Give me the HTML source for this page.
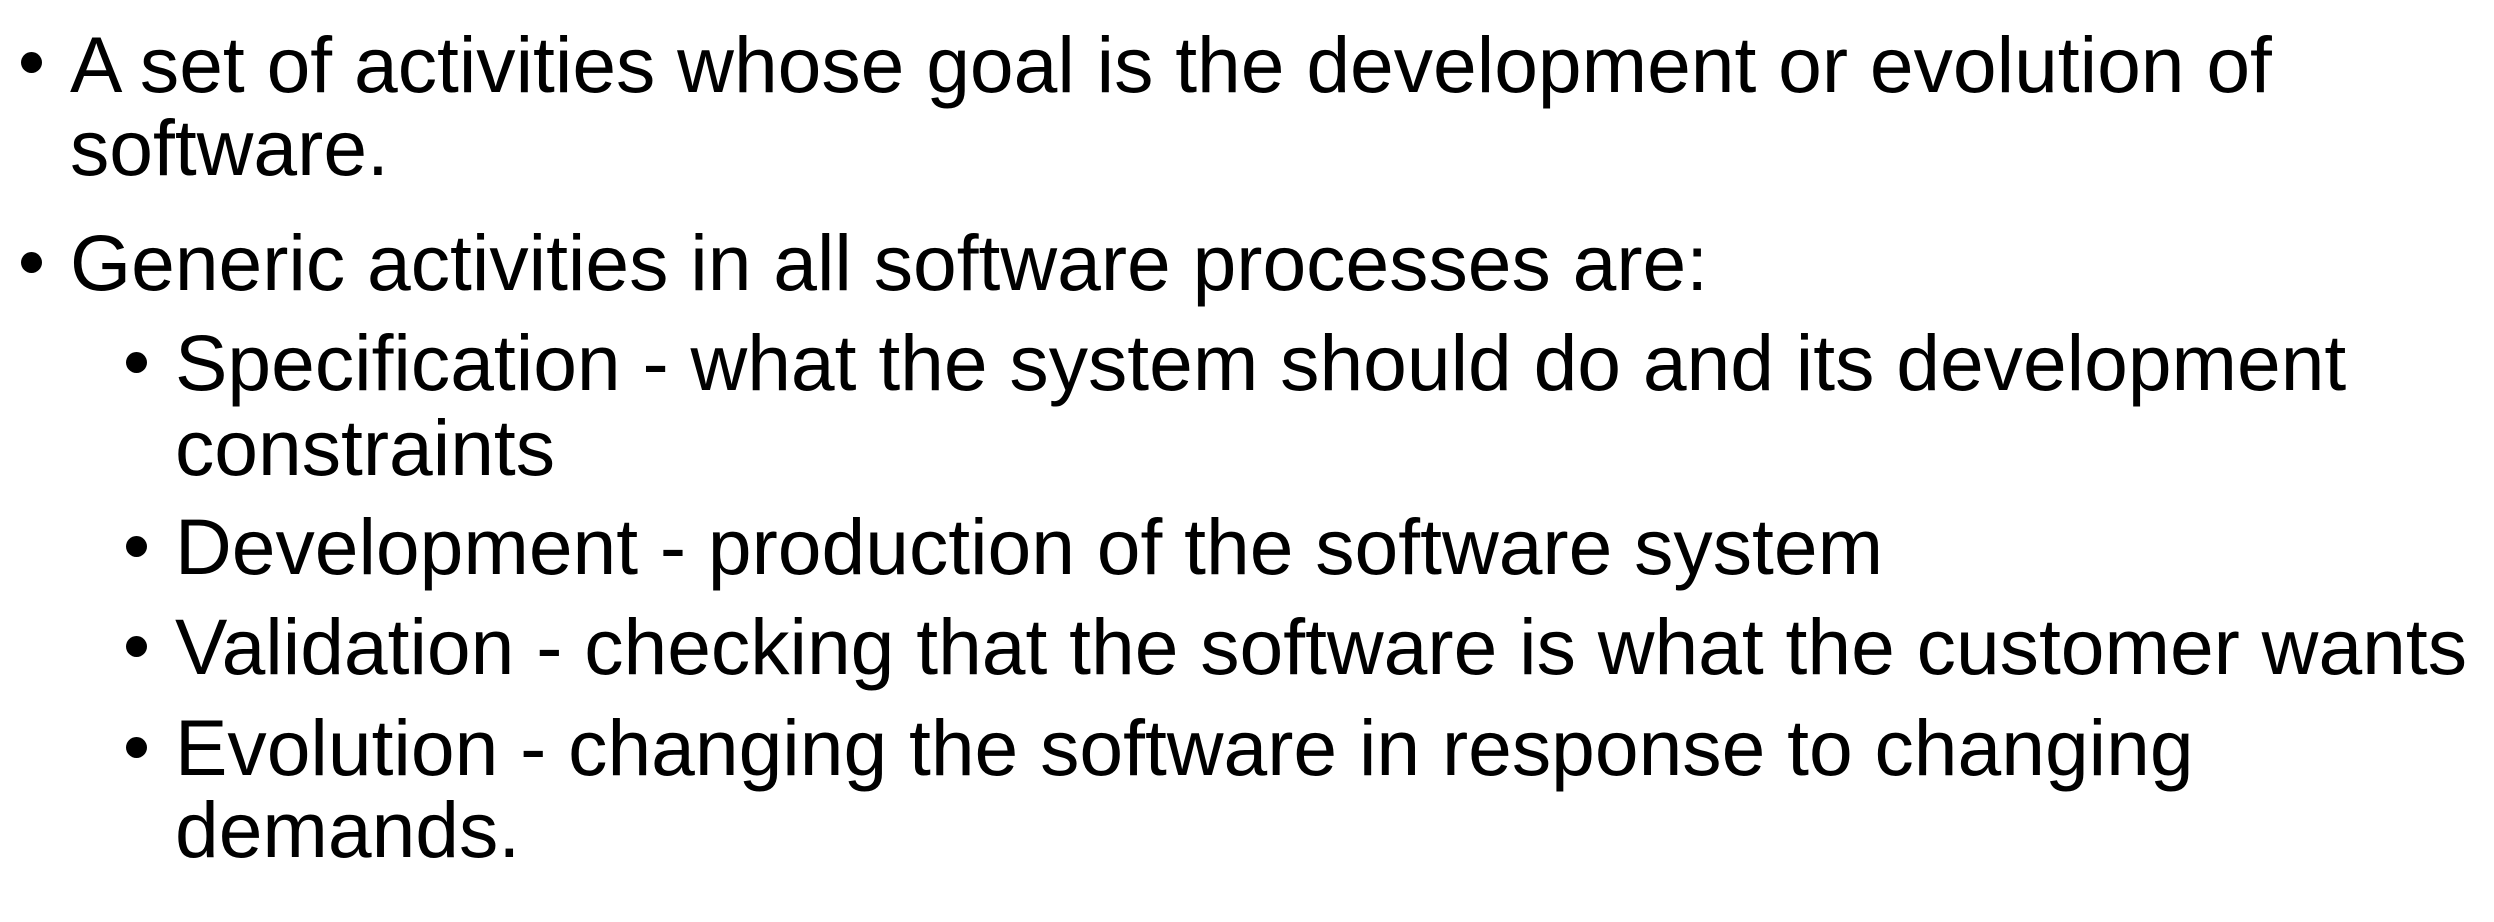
<!DOCTYPE html>
<html><head><meta charset="utf-8"><style>
html,body{margin:0;padding:0;background:#fff;width:2494px;height:922px;overflow:hidden}
.l{position:absolute;font-family:"Liberation Sans",Arial,sans-serif;font-size:78.6px;line-height:84px;white-space:nowrap;color:#000}
.b{position:absolute;width:21px;height:21px;border-radius:50%;background:#000}
</style></head><body>
<div class="b" style="left:21px;top:52px"></div>
<div class="l" style="left:70px;top:23px">A set of activities whose goal is the development or evolution of</div>
<div class="l" style="left:70px;top:106px">software.</div>
<div class="b" style="left:21px;top:252px"></div>
<div class="l" style="left:70px;top:221px">Generic activities in all software processes are:</div>
<div class="b" style="left:126px;top:352px"></div>
<div class="l" style="left:175px;top:321px">Specification - what the system should do and its development</div>
<div class="l" style="left:175px;top:406px">constraints</div>
<div class="b" style="left:126px;top:536px"></div>
<div class="l" style="left:175px;top:505px">Development - production of the software system</div>
<div class="b" style="left:126px;top:636px"></div>
<div class="l" style="left:175px;top:605px">Validation - checking that the software is what the customer wants</div>
<div class="b" style="left:126px;top:737px"></div>
<div class="l" style="left:175px;top:706px">Evolution - changing the software in response to changing</div>
<div class="l" style="left:175px;top:788px">demands.</div>
</body></html>
